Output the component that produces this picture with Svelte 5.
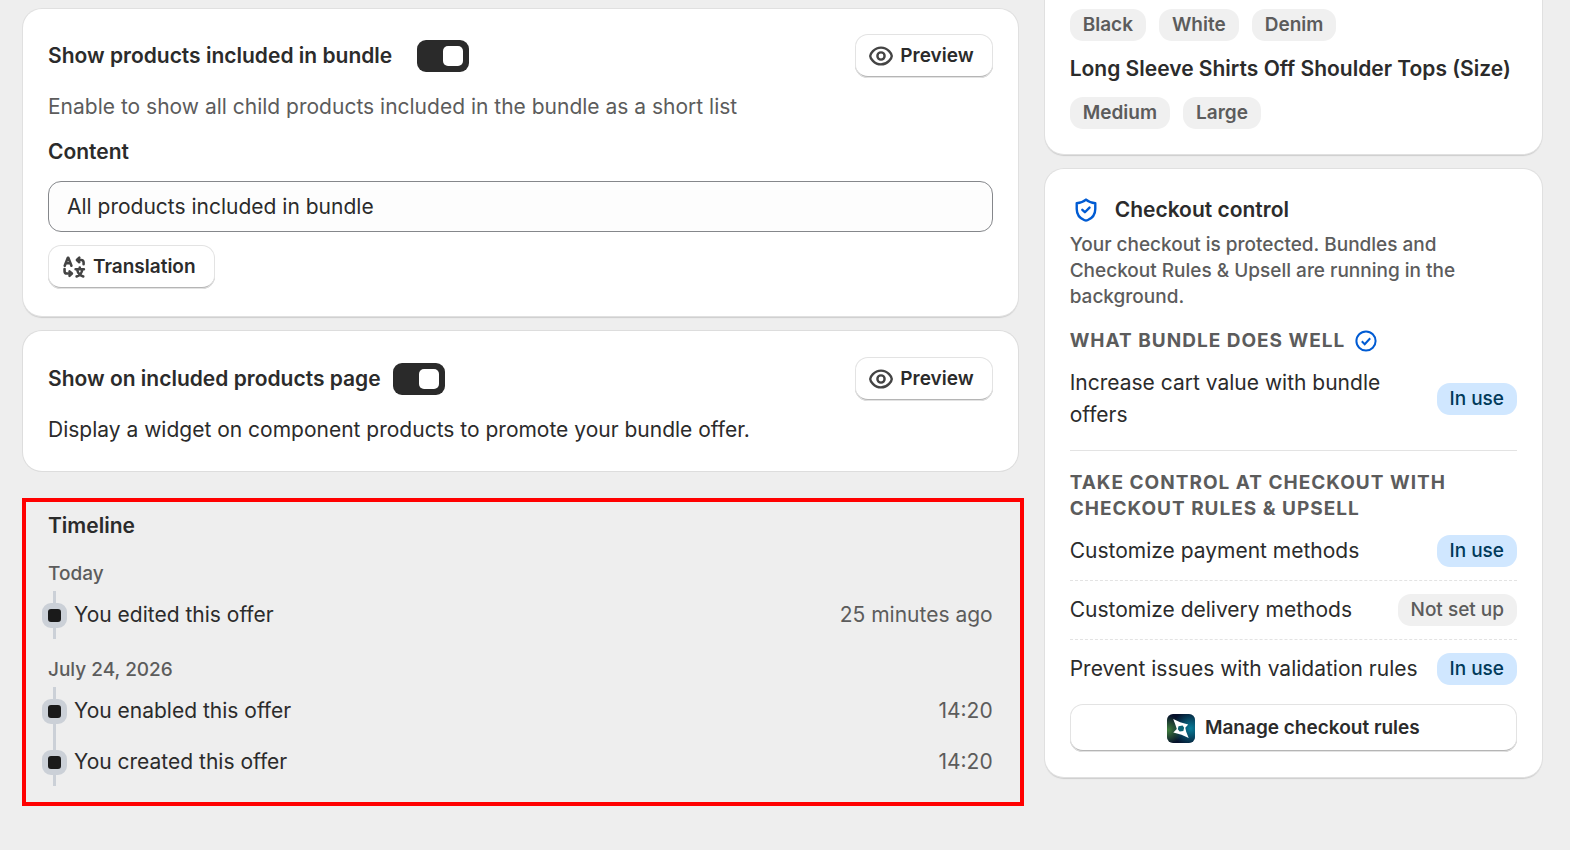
<script lang="ts">
  type Entry = { text: string; time: string };
  type Feature = { name: string; active: boolean };

  let showIncluded = $state(true);
  let showOnPage = $state(true);
  let content = $state('All products included in bundle');

  const colors = ['Black', 'White', 'Denim'];
  const sizes = ['Medium', 'Large'];

  const timeline: { day: string; entries: Entry[] }[] = [
    { day: 'Today', entries: [{ text: 'You edited this offer', time: '25 minutes ago' }] },
    {
      day: 'July 24, 2026',
      entries: [
        { text: 'You enabled this offer', time: '14:20' },
        { text: 'You created this offer', time: '14:20' },
      ],
    },
  ];

  const features: Feature[] = [
    { name: 'Customize payment methods', active: true },
    { name: 'Customize delivery methods', active: false },
    { name: 'Prevent issues with validation rules', active: true },
  ];
</script>

{#snippet previewButton()}
  <button class="button">
    <svg class="icon" viewBox="0 0 20 20" aria-hidden="true">
      <path d="M3.25 10c0-1 2.3-5.25 6.75-5.25S16.75 9 16.75 10 14.45 15.25 10 15.25 3.25 11 3.25 10Z" />
      <circle cx="10" cy="10" r="2.25" />
    </svg>
    Preview
  </button>
{/snippet}

{#snippet status(active: boolean)}
  <span class="badge" class:active>{active ? 'In use' : 'Not set up'}</span>
{/snippet}

<div class="page">
  <main>
    <section class="card">
      <header>
        <h2><label for="show-included">Show products included in bundle</label></h2>
        <input id="show-included" class="switch spaced" type="checkbox" bind:checked={showIncluded} />
        {@render previewButton()}
      </header>
      <p class="subdued">Enable to show all child products included in the bundle as a short list</p>
      <label class="field-label" for="content">Content</label>
      <input id="content" class="field" type="text" bind:value={content} />
      <button class="button">
        <svg class="icon bold" viewBox="0 0 20 20" aria-hidden="true">
          <path d="M4.2 9.2 6.1 4.3h.4l1.9 4.9M4.9 7.7h2.8" />
          <path d="M12.2 5.6h2.200c1 0 1.600.600 1.600 1.600v1.100M13.300 4.200l-1.500 1.400 1.500 1.400" />
          <path d="M4.100 11.200v1.400c0 1 .600 1.500 1.500 1.500h2.400M7.200 12.700l1.500 1.400-1.500 1.400" />
          <path d="M11 11.400h5.200M13.600 10.300v1.100M11.600 15.900c2.100-.700 3.300-2.200 3.600-4.300M12 11.800c.400 2.100 1.700 3.500 3.800 4.100" />
        </svg>
        Translation
      </button>
    </section>

    <section class="card">
      <header>
        <h2><label for="show-on-page">Show on included products page</label></h2>
        <input id="show-on-page" class="switch" type="checkbox" bind:checked={showOnPage} />
        {@render previewButton()}
      </header>
      <p>Display a widget on component products to promote your bundle offer.</p>
    </section>

    <section class="timeline">
      <h2>Timeline</h2>
      {#each timeline as group}
        <h3>{group.day}</h3>
        <ul>
          {#each group.entries as entry}
            <li>
              <span class="marker"></span>
              <span>{entry.text}</span>
              <time>{entry.time}</time>
            </li>
          {/each}
        </ul>
      {/each}
    </section>
  </main>

  <aside>
    <section class="card options">
      <div class="tags">
        {#each colors as color}<span class="badge strong">{color}</span>{/each}
      </div>
      <h3>Long Sleeve Shirts Off Shoulder Tops (Size)</h3>
      <div class="tags">
        {#each sizes as size}<span class="badge strong">{size}</span>{/each}
      </div>
    </section>

    <section class="card checkout">
      <div class="title">
        <svg class="icon blue" viewBox="0 0 20 20" aria-hidden="true">
          <path d="M10 3.5c1.500 1.300 3.400 2 5.800 2.300v3.500c0 3.300-2.100 5.900-4.900 7.100q-.9.400-1.800 0C6.300 15.200 4.200 12.600 4.200 9.300V5.800C6.600 5.500 8.500 4.800 10 3.500Z" />
          <path d="m7.700 9.900 1.600 1.500 2.900-2.900" />
        </svg>
        <h2>Checkout control</h2>
      </div>
      <p class="small">
        Your checkout is protected. Bundles and Checkout Rules &amp; Upsell are running in the background.
      </p>

      <h3 class="caps">
        What bundle does well
        <svg class="check" viewBox="0 0 22 22" aria-hidden="true">
          <circle cx="11" cy="11" r="9.600" />
          <path d="m6.800 11.300 2.900 2.900 5.500-6" />
        </svg>
      </h3>
      <div class="feature">
        <span>Increase cart value with bundle offers</span>
        {@render status(true)}
      </div>
      <hr />

      <h3 class="caps">Take control at checkout with Checkout Rules &amp; Upsell</h3>
      <ul class="features">
        {#each features as feature}
          <li class="feature">
            <span>{feature.name}</span>
            {@render status(feature.active)}
          </li>
        {/each}
      </ul>

      <button class="button wide">
        <svg class="logo" viewBox="0 0 28 29" aria-hidden="true">
          <defs>
            <radialGradient id="logo-green" cx="0.05" cy="0.55" r="0.5">
              <stop offset="0" stop-color="#3f7d3c" />
              <stop offset="1" stop-color="#3f7d3c" stop-opacity="0" />
            </radialGradient>
            <radialGradient id="logo-teal" cx="0.85" cy="0.5" r="0.65">
              <stop offset="0" stop-color="#087d99" />
              <stop offset="1" stop-color="#087d99" stop-opacity="0" />
            </radialGradient>
          </defs>
          <rect width="28" height="29" rx="6" fill="#06112b" />
          <rect width="28" height="29" rx="6" fill="url(#logo-teal)" />
          <rect width="28" height="29" rx="6" fill="url(#logo-green)" />
          <path fill="#fff" d="m6.200 5 7 3.200 8 2.200-2.900 3.300.9 4 2.500 6.300-7.200-3.200-8.200-2.300 3.500-3.400-1.400-4.300Z" />
          <path fill="#0c6475" d="m11.500 12.300 4.100-.9 1.500 2.300-.8 3.400-3.600.4-1.900-2.300Z" />
        </svg>
        Manage checkout rules
      </button>
    </section>
  </aside>
</div>

<style>
  :global(body) {
    margin: 0;
    background: #eee;
  }
  .page {
    display: grid;
    grid-template-columns: minmax(0, 2fr) minmax(0, 1fr);
    gap: 27px;
    align-items: start;
    padding: 0 28px 40px 23px;
    font: 410 21px/32px Inter, sans-serif;
    color: #2b2b2b;
  }
  main,
  aside {
    display: flex;
    flex-direction: column;
    gap: 15px;
  }
  main {
    padding-top: 9px;
  }
  h2,
  h3,
  p,
  ul {
    margin: 0;
    padding: 0;
    list-style: none;
  }
  h2 {
    font-size: 21px;
    font-weight: 640;
  }
  .card {
    display: flex;
    flex-direction: column;
    align-items: flex-start;
    gap: 13px;
    padding: 25px 25px 27px;
    border-radius: 19px;
    background: #fff;
    box-shadow: 0 0 0 1px #e0e0e0, 0 2px 1px #ccc;
  }
  main .card + .card {
    padding: 26px 25px 25px;
    box-shadow: 0 0 0 1px #ddd;
  }
  header {
    display: flex;
    align-items: center;
    align-self: stretch;
    gap: 12px;
  }
  header .button {
    margin-left: auto;
  }
  .subdued {
    color: #5c5c5c;
  }
  .switch {
    appearance: none;
    display: flex;
    align-items: center;
    width: 52px;
    height: 32px;
    margin: 0;
    padding: 0 6px;
    box-sizing: border-box;
    border-radius: 9px;
    background: #8a8a8a;
    cursor: pointer;
  }
  .switch::before {
    content: '';
    width: 20px;
    height: 20px;
    border-radius: 5px;
    background: #fff;
  }
  .switch:checked {
    justify-content: flex-end;
    background: #2a2a2a;
  }
  .switch.spaced {
    margin-left: 13px;
  }
  .field-label {
    font-weight: 600;
  }
  .field {
    width: 100%;
    height: 51px;
    box-sizing: border-box;
    padding: 0 18px;
    border: 1px solid #85878b;
    border-radius: 13px;
    background: #fdfdfd;
    font: inherit;
    color: inherit;
  }
  .button {
    display: flex;
    align-items: center;
    gap: 3px;
    height: 44px;
    padding: 0 19px 0 10px;
    border: 0;
    border-radius: 13px;
    background: #fff;
    box-shadow: inset 0 0 0 1px #e3e3e3, inset 0 -2px 0 #b5b5b5;
    font: 600 19px/26px Inter, sans-serif;
    color: #2b2b2b;
    cursor: pointer;
  }
  .button:hover {
    background: #fafafa;
  }
  .icon {
    width: 32px;
    height: 32px;
    fill: none;
    stroke: #444;
    stroke-width: 1.5;
    stroke-linecap: round;
    stroke-linejoin: round;
  }
  .icon.bold {
    stroke-width: 1.6;
  }
  .icon.blue {
    stroke: #005bd3;
  }

  .timeline {
    margin: 12px -6px 0 -1px;
    padding: 8px 27px 16px 22px;
    border: 4px solid #f00;
  }
  .timeline h2 {
    margin-bottom: 19px;
  }
  .timeline h3 {
    margin-bottom: 4px;
    font: 450 19px/26px Inter, sans-serif;
    color: #5c5c5c;
  }
  .timeline ul + h3 {
    margin-top: 18px;
  }
  .timeline ul {
    display: flex;
    flex-direction: column;
    gap: 3px;
    margin-left: -6px;
    background: linear-gradient(#cbd0d7, #cbd0d7) 11px 0 / 3px 100% no-repeat;
  }
  .timeline li {
    display: flex;
    align-items: center;
    gap: 7px;
    height: 48px;
  }
  .marker {
    width: 13px;
    height: 13px;
    border: 6px solid #cbd0d7;
    border-radius: 9px;
    background: #1a1a1a;
  }
  time {
    margin-left: auto;
    color: #5c5c5c;
  }

  .options {
    gap: 12px;
    padding: 9px 25px 25px;
    border-radius: 0 0 19px 19px;
  }
  .options h3 {
    font-size: 21px;
    font-weight: 580;
  }
  .tags {
    display: flex;
    gap: 13px;
  }
  .badge {
    flex: none;
    padding: 3px 13px;
    border-radius: 13px;
    background: #f0f0f0;
    font-size: 19px;
    font-weight: 500;
    line-height: 26px;
    color: #5c5c5c;
  }
  .badge.strong {
    font-weight: 600;
  }
  .badge.active {
    background: #d0e7ff;
    color: #003a5a;
  }
  .checkout {
    align-items: stretch;
    gap: 0;
    padding: 25px;
  }
  .title {
    display: flex;
    align-items: center;
    gap: 13px;
  }
  .small {
    margin: 6px 0 18px;
    font-size: 19px;
    font-weight: 450;
    line-height: 26px;
    color: #5c5c5c;
  }
  .caps {
    display: flex;
    align-items: center;
    gap: 10px;
    margin-bottom: 13px;
    font: 700 19px/26px Inter, sans-serif;
    letter-spacing: 1px;
    text-transform: uppercase;
    color: #5c5c5c;
  }
  .check {
    width: 22px;
    height: 22px;
    fill: none;
    stroke: #005bd3;
    stroke-width: 2;
  }
  .feature {
    display: flex;
    align-items: center;
    justify-content: space-between;
    gap: 13px;
  }
  hr {
    width: 100%;
    margin: 19px 0;
    border: 0;
    border-top: 1px solid #e3e3e3;
  }
  .features .feature + .feature {
    margin-top: 13px;
    padding-top: 13px;
    border-top: 1px dashed #e3e3e3;
  }
  .wide {
    justify-content: center;
    gap: 10px;
    height: 48px;
    margin-top: 19px;
    padding: 0 19px;
  }
  .logo {
    width: 28px;
    height: 29px;
  }
</style>
